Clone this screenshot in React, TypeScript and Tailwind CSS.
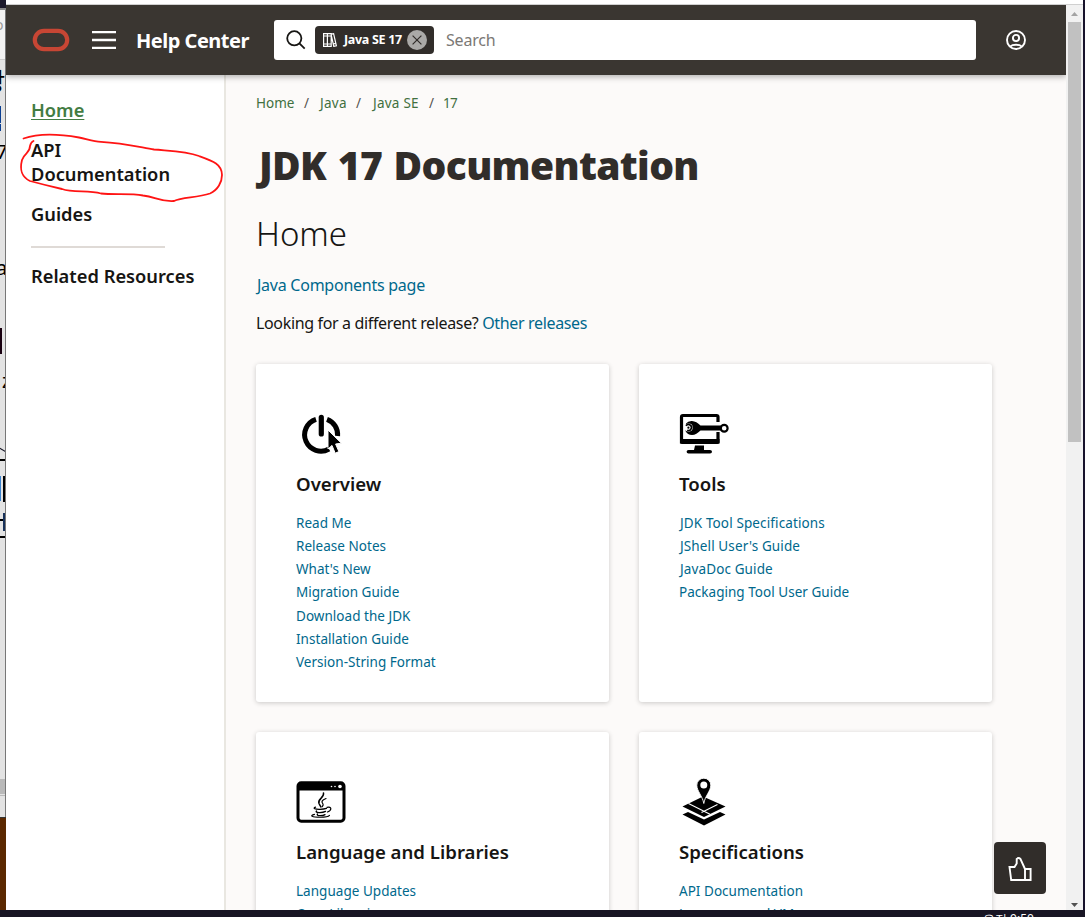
import type { ReactNode } from "react";

interface DocCard {
    title: string;
    icon: ReactNode;
    links: string[];
}

function OverviewIcon() {
    return (
        <svg width="50" height="50" viewBox="0 0 50 50" className="block">
            <path d="M20 11.3 A16.3 16.3 0 1 0 33 41" fill="none" stroke="#000" strokeWidth="5" />
            <path d="M31 11.3 A16.3 16.3 0 0 1 41.6 28" fill="none" stroke="#000" strokeWidth="5" />
            <path d="M25.3 9.4 V26" stroke="#000" strokeWidth="5.2" strokeLinecap="round" />
            <path d="M32 22 V41 L36 37.4 L39.2 45.2 L42.9 43.6 L39.6 36 L45.4 35.2 Z" fill="#000" stroke="#fff" strokeWidth="1" />
        </svg>
    );
}

function ToolsIcon() {
    return (
        <svg width="50" height="50" viewBox="0 0 50 50" className="block">
            <path d="M39 14 V9 Q39 7.5 37.5 7.5 H4 Q2.5 7.5 2.5 9 V34 H39 V24" fill="none" stroke="#000" strokeWidth="3.2" />
            <path d="M1 31 H40.5 V34 Q40.5 36 38.5 36 H3 Q1 36 1 34 Z" />
            <path d="M16 37.5 H25 V42 H31 Q33 42 33 43.7 Q33 45.4 31 45.4 H9.5 Q7.6 45.4 7.6 43.7 Q7.6 42 9.5 42 H15 Z" />
            <path d="M7 15.6 Q9 12.8 13 13 Q17.5 13.4 21.5 17.6 H42 V22.4 H21.5 Q17.5 26.6 13 27 Q8.5 27 6.5 23 Z" />
            <circle cx="9.6" cy="19.6" r="4.1" fill="#fff" />
            <path d="M7 17.8 A3 3 0 1 1 8.2 22.2" fill="none" stroke="#000" strokeWidth="1.7" />
            <circle cx="9.4" cy="19.7" r="1.1" />
            <circle cx="45.2" cy="20.2" r="3.4" fill="#fff" stroke="#000" strokeWidth="2.2" />
        </svg>
    );
}

function LanguageIcon() {
    return (
        <svg width="50" height="50" viewBox="0 0 50 50" className="block">
            <rect x="2" y="6.8" width="46" height="38.4" rx="3.2" fill="#fff" stroke="#000" strokeWidth="3" />
            <path d="M2 8 H48 V14.5 H2 Z" />
            <circle cx="44" cy="10.5" r="1.8" fill="#fff" />
            <circle cx="39" cy="10.5" r="0.8" fill="#fff" />
            <circle cx="35.5" cy="10.5" r="0.8" fill="#fff" />
            <g fill="none" stroke="#000" strokeLinecap="round">
                <path d="M27.5 17 C28.5 22 21 23 23 27.5 Q24 29.5 25 31" strokeWidth="1.5" />
                <path d="M30 22.5 C25 24.5 25.5 26 27 28 Q27.6 29 26.3 30.5" strokeWidth="1.2" />
                <path d="M19.5 31.2 C16.5 32.5 19 33.4 24 33.3 Q28 33.2 30.5 32.4 M20.5 35 C18.5 36.8 26 37.2 29.5 35.4 M21.5 38 C20 40 26 40.3 29 38.6" strokeWidth="1.3" />
                <path d="M31 31.4 C36 30 36 34.5 31.5 36" strokeWidth="1.2" />
                <path d="M18.5 38.4 C13 39.6 16 41.2 24 41.2 Q32 41.2 33.5 39.4" strokeWidth="1.1" />
            </g>
        </svg>
    );
}

function SpecificationsIcon() {
    return (
        <svg width="50" height="50" viewBox="0 0 50 50" className="block">
            <path d="M3.5 38.6 L9 36 L25 43.6 L41 36 L46.5 38.6 L25 49.5 Z" />
            <path d="M3.5 30.5 L24 20.6 L46.5 30.5 L25 41 Z" />
            <path d="M9.5 27.6 L31 38.2 M22.5 36.6 L38.5 28.6" fill="none" stroke="#fff" strokeWidth="1.1" />
            <path d="M24.8 27.5 C23.5 20 17.8 15 17.8 9.2 A7 7 0 1 1 31.8 9.2 C31.8 15 26 20 24.8 27.5 Z" stroke="#fff" strokeWidth="0.9" />
            <circle cx="24.8" cy="9" r="3.5" fill="#fff" />
        </svg>
    );
}

const cards: DocCard[] = [
    {
        title: "Overview",
        icon: <OverviewIcon />,
        links: [
            "Read Me",
            "Release Notes",
            "What's New",
            "Migration Guide",
            "Download the JDK",
            "Installation Guide",
            "Version-String Format",
        ],
    },
    {
        title: "Tools",
        icon: <ToolsIcon />,
        links: ["JDK Tool Specifications", "JShell User's Guide", "JavaDoc Guide", "Packaging Tool User Guide"],
    },
    {
        title: "Language and Libraries",
        icon: <LanguageIcon />,
        links: ["Language Updates", "Core Libraries"],
    },
    {
        title: "Specifications",
        icon: <SpecificationsIcon />,
        links: ["API Documentation", "Language and VM"],
    },
];

// Slice of the windows that lie behind the browser
function BackgroundStrip() {
    return (
        <div className="relative h-full w-1.5 shrink-0 overflow-hidden bg-[#e3e3e3]">
            <div className="h-2 bg-[#1d1a2c]" />
            <div className="h-[2px] bg-[#888]" />
            <div className="h-[50px] border-b border-[#ccc] bg-[#f2f2f2]" />
            <span className="absolute -left-[5px] top-[17px] text-[14px] leading-4 text-[#999]">o</span>
            <span className="absolute -left-[17px] top-[66px] font-['Noto_Sans_CJK_KR',sans-serif] text-[24px] leading-7">항</span>
            <span className="absolute left-0 top-[106px] h-[17px] w-px bg-[#0b3f91]" />
            <span className="absolute left-0 top-[124px] h-[7px] w-px bg-[#0b3f91]" />
            <span className="absolute -left-[4px] top-[140px] text-[20px] leading-6">7</span>
            <span className="absolute -left-[4px] top-[256px] text-[20px] leading-6">a</span>
            <span className="absolute left-0 top-[328px] h-[26px] w-[2px] bg-[#180010]" />
            <span className="absolute left-[2px] top-[373px] text-[19px] leading-4">z</span>
            <span className="absolute -left-[4px] top-[449px] h-px w-3 rotate-[30deg] bg-[#112]" />
            <span className="absolute left-0 top-[459px] h-[2px] w-1.5 bg-black" />
            <span className="absolute left-0 top-[476px] h-[25px] w-px bg-[#3a82ce]" />
            <span className="absolute left-[3px] top-[476px] h-[26px] w-[2px] bg-black" />
            <span className="absolute left-0 top-[519px] h-[2px] w-[3px] bg-black" />
            <span className="absolute left-[3px] top-[513px] h-[18px] w-[2px] bg-[#16305a]" />
            <span className="absolute left-0 top-[536px] h-[2px] w-1.5 bg-black" />
            <span className="absolute left-0 top-[779px] h-[15px] w-1.5 bg-[#b9b9b9]" />
            <span className="absolute left-0 top-[795px] h-px w-1.5 bg-[#b9b9b9]" />
            <span className="absolute left-0 top-[817px] h-[93px] w-1.5 border-t border-[#333] bg-[#5b2800]" />
            <span className="absolute right-0 top-[10px] h-[807px] w-px bg-[#777]" />
        </div>
    );
}

function Header() {
    return (
        <header className="relative z-10 flex h-[70px] w-[1060px] shrink-0 items-center bg-[#3a3631] shadow-[0_2px_6px_rgba(0,0,0,0.3)]">
            <svg width="38" height="24" viewBox="0 0 38 24" className="ml-[26px] block">
                <rect x="2.8" y="2.8" width="32.4" height="18.4" rx="9.2" fill="none" stroke="#c74634" strokeWidth="4.2" />
            </svg>
            <svg width="24" height="18" viewBox="0 0 24 18" className="ml-[22px] block">
                <path d="M0 1.2 H24 M0 9 H24 M0 16.8 H24" stroke="#fff" strokeWidth="2.3" />
            </svg>
            <span className="ml-5 w-[138px] whitespace-nowrap pt-0.5 text-[20px] font-bold tracking-[-0.5px] text-white">Help Center</span>
            <div className="flex h-10 w-[702px] items-center rounded-[3px] bg-white">
                <svg width="20" height="20" viewBox="0 0 20 20" className="ml-3 block" fill="none" stroke="#161513" strokeWidth="1.8">
                    <circle cx="8.3" cy="8.3" r="7.1" />
                    <path d="M13.4 13.4 L18.7 18.7" />
                </svg>
                <div className="ml-[9px] flex h-7 w-[119px] items-center rounded bg-[#312d2a]">
                    <svg width="14" height="14" viewBox="0 0 14 14" className="ml-2 block" fill="none" stroke="#fff" strokeWidth="1.2">
                        <path d="M0.6 0.6 H4.4 V13.4 H0.6 Z M4.4 0.6 H8.2 V13.4 H4.4 Z M0.6 3 H8.2 M0.6 11 H8.2 M8.4 1.2 L10.6 0.7 L13.4 12.8 L10.8 13.4 L8.3 2.5 M10.2 11 L12.8 10.4" />
                    </svg>
                    <span className="ml-[7px] w-[63px] whitespace-nowrap text-[12.5px] font-bold tracking-[-0.3px] text-white">Java SE 17</span>
                    <svg width="20" height="20" viewBox="0 0 20 20" className="block">
                        <circle cx="10" cy="10" r="10" fill="#aaa9a7" />
                        <path d="M5.6 5.6 L14.4 14.4 M14.4 5.6 L5.6 14.4" stroke="#312d2a" strokeWidth="1.2" />
                    </svg>
                </div>
                <span className="ml-3 text-[16px] tracking-[-0.2px] text-[#7b7875]">Search</span>
            </div>
            <svg width="20" height="20" viewBox="0 0 20 20" className="ml-[30px] block" fill="none" stroke="#fff" strokeWidth="1.9">
                <circle cx="10" cy="10" r="9" />
                <circle cx="10" cy="8" r="3.1" />
                <path d="M4.4 16.4 Q6 14.8 10 14.8 Q14 14.8 15.6 16.4" />
            </svg>
        </header>
    );
}

function Sidebar() {
    return (
        <nav className="relative w-[220px] shrink-0 border-r-2 border-[#e9e7e1] bg-white pl-[25px] pt-[23px] text-[18.3px] font-semibold leading-6 text-[#161513]">
            <a className="block w-fit text-[#437c43] underline underline-offset-2">Home</a>
            <a className="mt-4 block w-[150px]">API Documentation</a>
            <a className="mt-4 block">Guides</a>
            <div className="mt-5 h-[2px] w-[134px] bg-[#dfdad6]" />
            <a className="mt-4 block whitespace-nowrap">Related Resources</a>
            <svg width="210" height="75" viewBox="0 0 210 75" className="absolute left-[9px] top-[55px]" fill="none" stroke="#ff1414" strokeWidth="1.8" strokeLinecap="round">
                <path d="M8.5 8.5 C24 3 44 4 64 7.5 C72 9 78 11.5 86 11.8 C108 13 124 17 139 19.5 C156 21 171 21 184 26 C198 31 207 34 207 45 C207 52 203 60 195 63.5 C182 68 167 67 159 71 C145 72 141 67 128 65.5 C115 63 99 65 86 63.5 C73 60 58 63 47 59 C34 56 26 54 15 51 C5 46 5 38 7 30 C10 22 15 23 15 16 Q16 12 18.5 11" />
            </svg>
        </nav>
    );
}

function Breadcrumbs() {
    return (
        <div className="mt-[18px] flex text-[13.5px] leading-5 text-[#41703f]">
            <span className="w-12">Home</span>
            <span className="w-4 text-[#55524e]">/</span>
            <span className="w-9 tracking-[0.3px]">Java</span>
            <span className="w-[17px] text-[#55524e]">/</span>
            <span className="w-14 tracking-[0.25px]">Java SE</span>
            <span className="w-3.5 text-[#55524e]">/</span>
            <span className="tracking-[-0.6px]">17</span>
        </div>
    );
}

function Card({ title, icon, links }: DocCard) {
    return (
        <section className="h-[338px] rounded-[3px] bg-white pl-10 pt-11 shadow-[0_1px_5px_rgba(0,0,0,0.2)]">
            {icon}
            <h3 className="mt-3.5 whitespace-nowrap text-[18.6px] font-semibold leading-6 text-[#161513]">{title}</h3>
            <ul className="mt-4 text-[13.5px] leading-[23.15px] tracking-[0.03px] text-[#00688c]">
                {links.map((link) => (
                    <li key={link} className={link.startsWith("J") ? "pl-px tracking-[0.12px]" : ""}>
                        {link}
                    </li>
                ))}
            </ul>
        </section>
    );
}

function Scrollbar() {
    return (
        <div className="flex h-full w-[17px] shrink-0 flex-col items-center bg-[#f1f1f1]">
            <svg width="17" height="17" viewBox="0 0 17 17" className="block shrink-0">
                <path d="M5 11 L8.5 7 L12 11 Z" fill="#a3a3a3" />
            </svg>
            <div className="h-[420px] w-[13px] bg-[#c1c1c1]" />
            <svg width="17" height="17" viewBox="0 0 17 17" className="mt-auto block shrink-0">
                <path d="M5 10 L8.5 14 L12 10 Z" fill="#505050" />
            </svg>
        </div>
    );
}

export default function App() {
    return (
        <div className="flex h-[917px] w-[1085px] flex-col overflow-hidden bg-[#181524] font-['Noto_Sans',sans-serif]">
            <div className="flex h-[910px] shrink-0">
                <BackgroundStrip />
                <div className="flex w-[1077px] shrink-0 flex-col">
                    <div className="h-[5px] shrink-0 border-b border-[#d0d0d0] bg-white" />
                    <div className="flex h-[905px]">
                        <div className="relative flex w-[1060px] shrink-0 flex-col overflow-hidden">
                            <Header />
                            <div className="flex min-h-0 flex-1 bg-[#fcfaf9]">
                                <Sidebar />
                                <main className="w-[840px] shrink-0 pl-[30px] text-[#161513]">
                                    <Breadcrumbs />
                                    <h1 className="ml-[3px] mt-7 whitespace-nowrap text-[39px] font-black leading-[48px] tracking-[-0.65px] text-[#312d2a] [word-spacing:2px]">JDK 17 Documentation</h1>
                                    <h2 className="mt-[21px] text-[33px] font-light leading-[48px]">Home</h2>
                                    <p className="ml-px mt-[15px] text-[16px] leading-6 tracking-[-0.25px] text-[#00688c]">Java Components page</p>
                                    <p className="mt-3.5 text-[16px] leading-6 tracking-[-0.35px]">
                                        Looking for a different release? <a className="text-[#00688c]">Other releases</a>
                                    </p>
                                    <div className="mt-[29px] grid grid-cols-[353px_353px] gap-[30px]">
                                        {cards.map((card) => (
                                            <Card key={card.title} {...card} />
                                        ))}
                                    </div>
                                </main>
                            </div>
                            <button className="absolute bottom-4 right-5 z-20 flex h-[52px] w-[52px] items-center justify-center rounded bg-[#312d2a] pt-px">
                                <svg width="24" height="26" viewBox="0 0 24 26" fill="none" stroke="#fff" strokeWidth="1.9">
                                    <path d="M17 13 V24 H3.2 L1.5 11 H6.5 L8.7 7.5 V3 Q10.5 1.2 12.5 3 L17 13 M17 13 H22.6 V24 H17 Z" />
                                </svg>
                            </button>
                        </div>
                        <Scrollbar />
                    </div>
                </div>
                <div className="w-[2px] bg-[#17122b]" />
            </div>
            <div className="h-[7px] overflow-hidden pl-[983px] pt-1">
                <span className="block whitespace-nowrap text-[12px] leading-[10px] text-white">오전 9:50</span>
            </div>
        </div>
    );
}
